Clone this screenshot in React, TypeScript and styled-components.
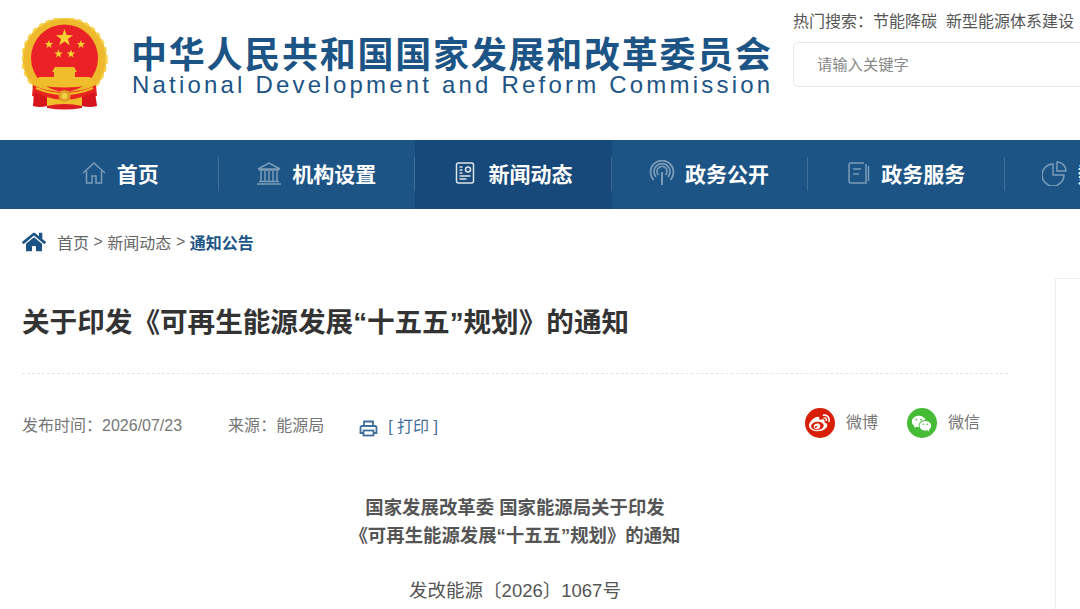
import React from 'react'
import styled, { createGlobalStyle } from 'styled-components'
import { FaWeibo, FaHome } from 'react-icons/fa'
import { RiWechatFill } from 'react-icons/ri'

const COLON = '\uFF1A'

const Global = createGlobalStyle`
  html, body { margin: 0; padding: 0; background: #fff; overflow: hidden; }
  body { font-family: "Liberation Sans", "Noto Sans CJK SC", sans-serif; color: #666; }
`

const Page = styled.div`
  width: 1080px;
  height: 609px;
  overflow: hidden;
`

const Header = styled.header`
  height: 140px;
  display: flex;
  padding-left: 22px;
  box-sizing: border-box;
`

const Brand = styled.div`
  width: 771px;
  flex: none;
  display: flex;
  align-items: flex-start;
  padding-top: 18px;
  box-sizing: border-box;
`

const Names = styled.div`
  margin-left: 23px;
  padding-top: 20px;
  color: #1c5485;
  white-space: nowrap;
`

const CnName = styled.div`
  font-size: 36px;
  line-height: 36px;
  font-weight: 700;
  letter-spacing: 1.75px;
`

const EnName = styled.div`
  font-size: 24px;
  line-height: 22px;
  letter-spacing: 3.2px;
  margin-left: 1px;
`

const SearchArea = styled.div`
  flex: none;
  width: 287px;
  padding-top: 11px;
`

const HotWords = styled.div`
  font-size: 16px;
  line-height: 21px;
  color: #555;
  white-space: nowrap;
  & > span { margin-left: 9px; }
`

const SearchBox = styled.div`
  margin-top: 10px;
  height: 45px;
  width: 320px;
  box-sizing: border-box;
  border: 1px solid #e8e8e8;
  border-radius: 5px;
  padding-left: 23px;
  font-size: 15.3px;
  line-height: 43px;
  color: #888;
`

const Nav = styled.nav`
  height: 69px;
  background: #1c5485;
  display: flex;
  padding-left: 22.6px;
  overflow: hidden;
`

const NavItem = styled.a<{ $active?: boolean; $last?: boolean }>`
  flex: none;
  width: 196.4px;
  height: 69px;
  box-sizing: border-box;
  padding: 0 2px 3px 0;
  position: relative;
  display: flex;
  align-items: center;
  justify-content: center;
  gap: 10px;
  font-size: 21px;
  font-weight: 700;
  color: #fff;
  background: ${p => (p.$active ? '#17497a' : 'transparent')};
  &::after {
    content: '';
    display: ${p => (p.$last ? 'none' : 'block')};
    position: absolute;
    right: 0;
    top: 17px;
    height: 34px;
    width: 1px;
    background: rgba(255, 255, 255, 0.16);
  }
`

const NavIcon = styled.svg<{ $active?: boolean }>`
  width: 26px;
  height: 26px;
  flex: none;
  fill: none;
  stroke: #fff;
  stroke-width: 1.5;
  opacity: ${p => (p.$active ? 0.85 : 0.42)};
`

const Crumbs = styled.div`
  height: 69px;
  padding: 0 0 3px 22px;
  box-sizing: border-box;
  display: flex;
  align-items: center;
  font-size: 16px;
  color: #666;
  & > svg { color: #1c5485; font-size: 24px; margin-right: 11px; }
  & > b { color: #1c5485; }
  & > span { margin-right: 4.5px; }
`

const Content = styled.div`
  display: flex;
  align-items: flex-start;
`

const Article = styled.main`
  width: 986px;
  margin-left: 22px;
  flex: none;
`

const Title = styled.h1`
  margin: 0;
  height: 96px;
  box-sizing: border-box;
  border-bottom: 1px dashed #e6e6e6;
  padding-top: 26px;
  font-size: 27.6px;
  line-height: 38px;
  font-weight: 700;
  color: #333;
  white-space: nowrap;
`

const Meta = styled.div`
  height: 100px;
  display: flex;
  align-items: flex-start;
  padding-top: 41px;
  box-sizing: border-box;
  font-size: 16px;
  line-height: 22px;
  color: #777;
`

const MetaText = styled.span<{ $gap?: number }>`
  margin-right: ${p => p.$gap ?? 0}px;
`

const PrintLink = styled.span`
  display: flex;
  align-items: center;
  color: #3f6f9c;
  gap: 10px;
  margin-top: 1px;
  & > svg { width: 19px; height: 17px; margin-top: 3px; }
`

const Share = styled.div`
  margin-left: auto;
  margin-right: 28px;
  display: flex;
  gap: 29px;
  margin-top: -7px;
`

const ShareItem = styled.span`
  display: flex;
  align-items: center;
  gap: 11px;
  height: 30px;
  color: #777;
`

const ShareDot = styled.span<{ $bg: string }>`
  width: 30px;
  height: 30px;
  border-radius: 50%;
  background: ${p => p.$bg};
  color: #fff;
  display: flex;
  align-items: center;
  justify-content: center;
  font-size: 21px;
`

const Heading = styled.div`
  text-align: center;
  font-size: 18.4px;
  line-height: 28px;
  font-weight: 700;
  color: #555;
  margin-top: 20px;
`

const DocNo = styled.div`
  text-align: center;
  margin-top: 27px;
  font-size: 18.5px;
  line-height: 28px;
  color: #555;
`

const Side = styled.aside`
  margin-left: 47px;
  width: 60px;
  height: 340px;
  flex: none;
  border-left: 1px solid #eee;
  border-top: 1px solid #f1f1f1;
`

const star = (cx: number, cy: number, r: number) => {
  const pts: string[] = []
  for (let i = 0; i < 10; i++) {
    const a = (Math.PI / 5) * i - Math.PI / 2
    const rad = i % 2 === 0 ? r : r * 0.4
    pts.push(`${(cx + rad * Math.cos(a)).toFixed(1)},${(cy + rad * Math.sin(a)).toFixed(1)}`)
  }
  return pts.join(' ')
}

// coordinates are the page's own, so the viewBox starts at the emblem's corner
const Emblem = () => (
  <svg width="86" height="92" viewBox="22 18 86 92">
    <ellipse cx="64.500" cy="59" rx="42" ry="41" fill="#eeb92c" />
    <ellipse cx="64.500" cy="59" rx="42" ry="41" fill="none" stroke="#f6d24a" strokeWidth="2.500" strokeDasharray="5 3" />
    <circle cx="64.500" cy="58" r="33.500" fill="#ea2127" />
    <g fill="#f5d232">
      <polygon points={star(64.500, 38, 9)} />
      <polygon points={star(49, 44.500, 4.500)} />
      <polygon points={star(81, 44.500, 4.500)} />
      <polygon points={star(58.500, 54, 4.500)} />
      <polygon points={star(71, 54, 4.500)} />
    </g>
    <g fill="#f0bd2b">
      <path d="M52 72H77L74 67H55Z" />
      <rect x="54" y="72" width="21" height="5" />
      <path d="M39 77H90L95 84Q64 91 34 84Z" />
    </g>
    <path d="M33 85Q46 92 64 92Q83 92 96 85L97 96Q80 100 64 100Q48 100 32 96Z" fill="#e8241f" />
    <path d="M36 88Q50 94 64 94Q79 94 93 88" fill="none" stroke="#f0bd2b" strokeWidth="2" />
    <path d="M34 92L47 97V106Q40 108 33 106Z" fill="#d6151c" />
    <path d="M95 92L82 97V106Q90 108 97 106Z" fill="#d6151c" />
    <path d="M47 97Q64 103 82 97V106Q64 110 47 106Z" fill="#f0bd2b" />
    <path d="M47 106Q64 102 82 106V108Q64 111 47 108Z" fill="#dc1c20" />
    <circle cx="64.500" cy="96" r="6" fill="#dfa124" />
    <circle cx="64.500" cy="96" r="3" fill="#f4cf45" />
  </svg>
)

const navItems = [
  {
    label: '首页',
    icon: <path d="M2 13 13 3l11 10M5.500 11v12h5.500v-7h4v7h5.500V11" />,
  },
  {
    label: '机构设置',
    icon: <path d="M2 9 13 3l11 6ZM3 10h20M5 11v10M9 11v10M13 11v10M17 11v10M21 11v10M3 21.500h20M1 24h24" />,
  },
  {
    label: '新闻动态',
    active: true,
    icon: (
      <>
        <rect x="3.500" y="3" width="17" height="20" rx="2" />
        <circle cx="15" cy="9.500" r="2.500" />
        <path d="M6.500 7h3M6.500 10h3M6.500 13h3M6.500 16h11M6.500 19h7" />
      </>
    ),
  },
  {
    label: '政务公开',
    icon: (
      <>
        <path d="M7 17a8 8 0 1 1 12 0M9.500 15a5 5 0 1 1 7 0M4.700 20a11.500 11.500 0 1 1 16.600 0" strokeWidth="1.700" />
        <path d="M13 12v13" strokeWidth="2" />
      </>
    ),
  },
  {
    label: '政务服务',
    icon: (
      <>
        <path d="M21 4v19H6a2 2 0 0 1-2-2V5a2 2 0 0 1 2-2h13M23.500 6v15" />
        <path d="M8 9h8M8 14h6" />
      </>
    ),
  },
  {
    label: '数据统计',
    last: true,
    icon: (
      <>
        <path d="M11 4a11 11 0 1 0 11 11H11Z" />
        <path d="M15 2v9h9a9 9 0 0 0-9-9Z" />
      </>
    ),
  },
]

export default function App() {
  return (
    <Page>
      <Global />
      <Header>
        <Brand>
          <Emblem />
          <Names>
            <CnName>中华人民共和国国家发展和改革委员会</CnName>
            <EnName>National Development and Reform Commission</EnName>
          </Names>
        </Brand>
        <SearchArea>
          <HotWords>热门搜索{COLON}节能降碳<span>新型能源体系建设</span></HotWords>
          <SearchBox>请输入关键字</SearchBox>
        </SearchArea>
      </Header>
      <Nav>
        {navItems.map(item => (
          <NavItem key={item.label} $active={item.active} $last={item.last}>
            <NavIcon viewBox="0 0 26 26" $active={item.active}>{item.icon}</NavIcon>
            {item.label}
          </NavItem>
        ))}
      </Nav>
      <Crumbs>
        <FaHome />
        <span>首页</span>
        <span>&gt;</span>
        <span>新闻动态</span>
        <span>&gt;</span>
        <b>通知公告</b>
      </Crumbs>
      <Content>
        <Article>
          <Title>关于印发《可再生能源发展“十五五”规划》的通知</Title>
          <Meta>
            <MetaText $gap={46}>发布时间{COLON}2026/07/23</MetaText>
            <MetaText $gap={35}>来源{COLON}能源局</MetaText>
            <PrintLink>
              <svg viewBox="0 0 19 17" fill="none" stroke="#3f6f9c" strokeWidth="1.800">
                <path d="M5 6V1.500h9V6M4 13H1.500V7.500a1.500 1.500 0 0 1 1.500-1.500h13a1.500 1.500 0 0 1 1.500 1.500V13H15" />
                <rect x="4.500" y="10.500" width="10" height="5" />
              </svg>
              [ 打印 ]
            </PrintLink>
            <Share>
              <ShareItem>
                <ShareDot $bg="#d81e06"><FaWeibo /></ShareDot>
                微博
              </ShareItem>
              <ShareItem>
                <ShareDot $bg="#46bb36"><RiWechatFill /></ShareDot>
                微信
              </ShareItem>
            </Share>
          </Meta>
          <Heading>
            国家发展改革委 国家能源局关于印发
            <br />
            《可再生能源发展“十五五”规划》的通知
          </Heading>
          <DocNo>发改能源〔2026〕1067号</DocNo>
        </Article>
        <Side />
      </Content>
    </Page>
  )
}
